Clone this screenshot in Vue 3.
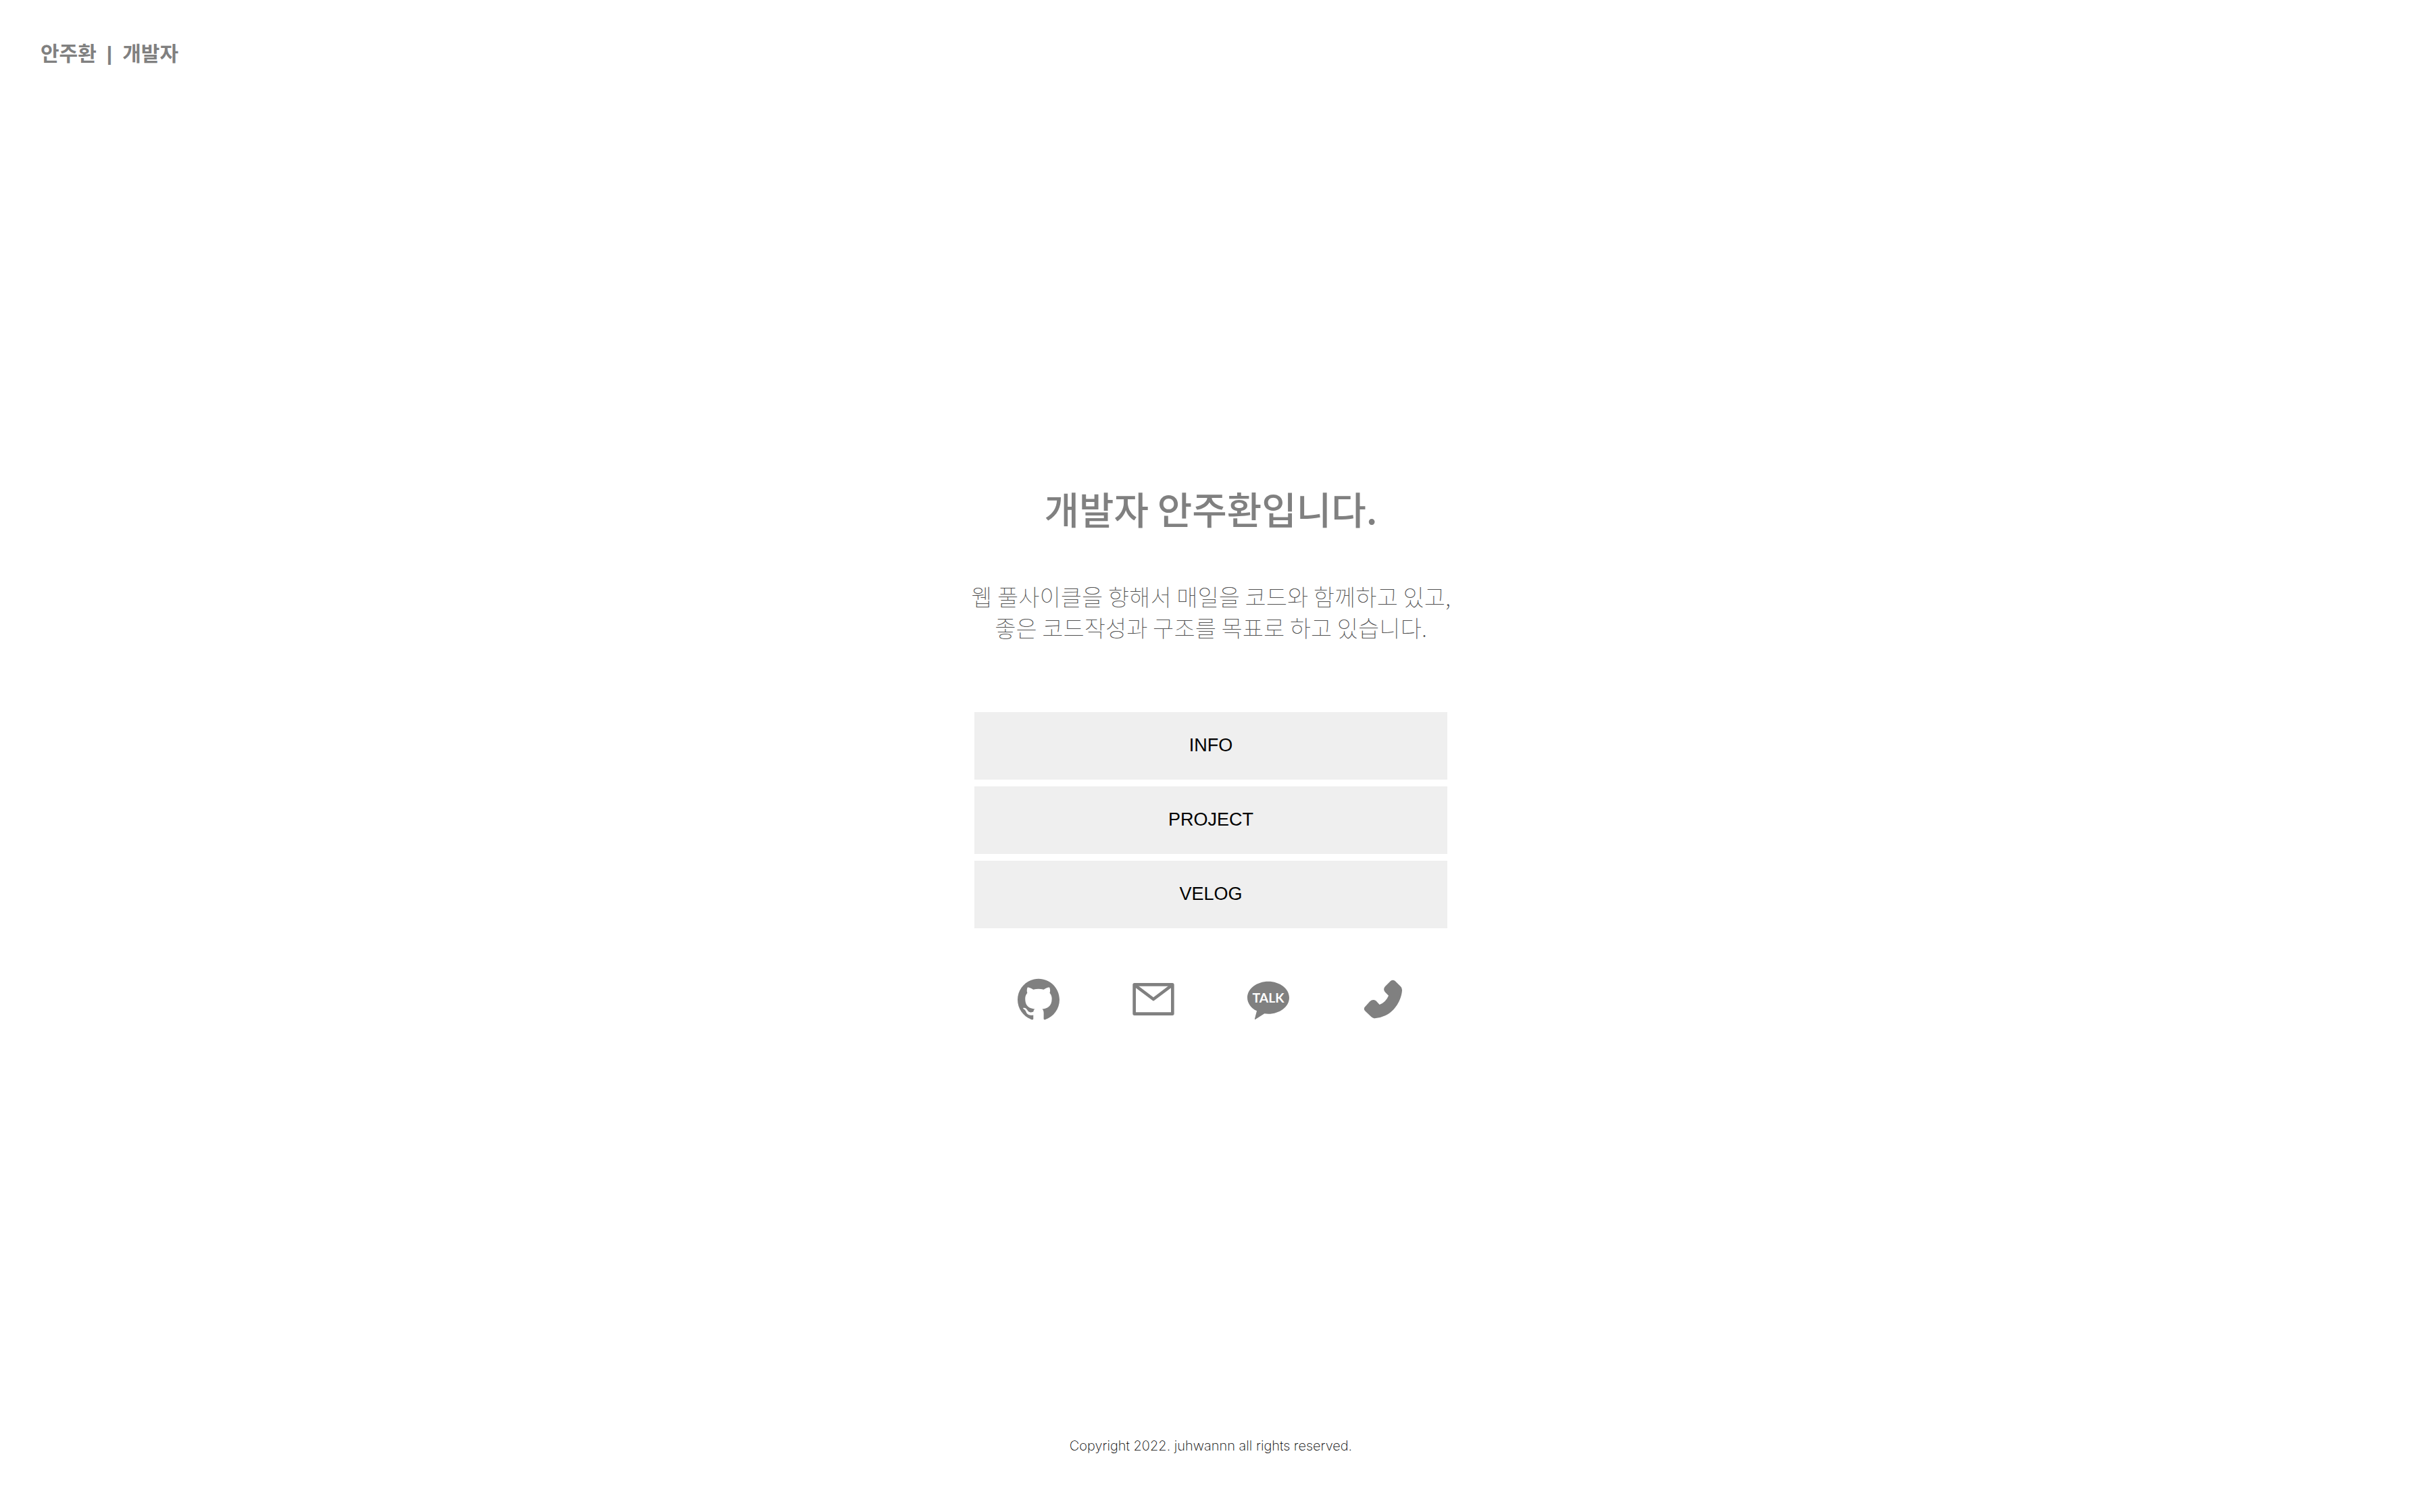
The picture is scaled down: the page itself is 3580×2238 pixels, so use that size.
<script setup>
const menus = ['INFO', 'PROJECT', 'VELOG']
</script>

<template>
  <div class="page">
    <header class="header">
      <span>안주환</span>
      <span class="divider">|</span>
      <span>개발자</span>
    </header>

    <main class="main">
      <h1 class="title">개발자 안주환입니다.</h1>
      <p class="intro">
        웹 풀사이클을 향해서 매일을 코드와 함께하고 있고,<br />
        좋은 코드작성과 구조를 목표로 하고 있습니다.
      </p>

      <nav class="menu">
        <button v-for="menu in menus" :key="menu" type="button" class="menu-button">{{ menu }}</button>
      </nav>

      <div class="contacts">
        <a href="#github" class="contact" aria-label="GitHub">
          <svg class="icon" viewBox="0 0 24 24">
            <path d="M12 .297c-6.63 0-12 5.373-12 12 0 5.303 3.438 9.8 8.205 11.385.6.113.82-.258.82-.577 0-.285-.01-1.04-.015-2.04-3.338.724-4.042-1.61-4.042-1.61C4.422 18.07 3.633 17.7 3.633 17.7c-1.087-.744.084-.729.084-.729 1.205.084 1.838 1.236 1.838 1.236 1.07 1.835 2.809 1.305 3.495.998.108-.776.417-1.305.76-1.605-2.665-.3-5.466-1.332-5.466-5.93 0-1.31.465-2.38 1.235-3.22-.135-.303-.54-1.523.105-3.176 0 0 1.005-.322 3.3 1.23.96-.267 1.98-.399 3-.405 1.02.006 2.04.138 3 .405 2.28-1.552 3.285-1.23 3.285-1.23.645 1.653.24 2.873.12 3.176.765.84 1.23 1.91 1.23 3.22 0 4.61-2.805 5.625-5.475 5.92.42.36.81 1.096.81 2.22 0 1.606-.015 2.896-.015 3.286 0 .315.21.69.825.57C20.565 22.092 24 17.592 24 12.297c0-6.627-5.373-12-12-12" />
          </svg>
        </a>
        <a href="#mail" class="contact" aria-label="Mail">
          <svg class="icon" viewBox="0 0 186 186">
            <rect x="8" y="28" width="170" height="130" rx="1" fill="none" stroke="currentColor" stroke-width="14" stroke-linejoin="round" />
            <path d="M12 32L93 93L174 32" fill="none" stroke="currentColor" stroke-width="14" stroke-linejoin="round" />
          </svg>
        </a>
        <a href="#talk" class="contact" aria-label="KakaoTalk">
          <svg class="icon" viewBox="0 0 186 186">
            <path d="M93 14C144 14 186 46 186 86C186 126 144 158 93 158C87 158 81 158 76 157L36 182Q32 185 33 179L42 145C16 132 0 110 0 86C0 46 42 14 93 14Z" />
            <text x="93" y="109" class="talk" text-anchor="middle">TALK</text>
          </svg>
        </a>
        <a href="#phone" class="contact" aria-label="Phone">
          <svg class="icon" viewBox="0 0 186 186">
            <path d="M126 12Q136 4 146 12L171 37Q178 44 177 54C174 98 145 146 102 166Q79 177 56 178Q47 178 40 171L14 146Q3 136 13 126L34 103Q47 90 61 100L77 117Q105 106 117 77L101 61Q91 48 102 36Z" />
          </svg>
        </a>
      </div>
    </main>

    <footer class="footer">Copyright 2022. juhwannn all rights reserved.</footer>
  </div>
</template>

<style>
body {
  margin: 0;
  background: #fff;
}
</style>

<style scoped>
.page {
  box-sizing: border-box;
  min-height: 100vh;
  padding-left: 4px;
  display: flex;
  flex-direction: column;
  color: #808080;
  font-family: "Noto Sans CJK KR", sans-serif;
}
.header {
  padding: 55px 56px 53px;
  display: flex;
  align-items: baseline;
  gap: 15px;
  font-size: 30px;
  line-height: 44px;
  font-weight: 700;
}
.divider {
  font-family: "Liberation Sans", sans-serif;
}
.main {
  flex: 1;
  padding-bottom: 18px;
  display: flex;
  flex-direction: column;
  align-items: center;
  justify-content: center;
}
.title {
  margin: 0 0 68px;
  font-size: 56px;
  line-height: 80px;
  font-weight: 500;
}
.intro {
  margin: 0 0 102px;
  color: #505050;
  font-size: 34px;
  line-height: 46px;
  font-weight: 100;
  text-align: center;
}
.menu {
  width: 100%;
  max-width: 700px;
  display: flex;
  flex-direction: column;
  gap: 10px;
}
.menu-button {
  border: 0;
  padding: 33px 0 35px;
  background: #efefef;
  color: #000;
  font-family: "Liberation Sans", sans-serif;
  font-size: 27px;
  line-height: 32px;
  cursor: pointer;
}
.contacts {
  width: 100%;
  max-width: 680px;
  margin-top: 74px;
  display: flex;
}
.contact {
  flex: 1;
  display: flex;
  justify-content: center;
  color: inherit;
}
.icon {
  width: 62px;
  height: 62px;
  fill: currentColor;
}
.talk {
  fill: #fff;
  font-family: Lato, sans-serif;
  font-size: 58px;
  font-weight: 700;
}
.footer {
  padding: 40px 0 82px;
  text-align: center;
  color: #000;
  font-family: Inter, sans-serif;
  font-size: 20px;
  line-height: 32px;
  font-weight: 200;
}
</style>
